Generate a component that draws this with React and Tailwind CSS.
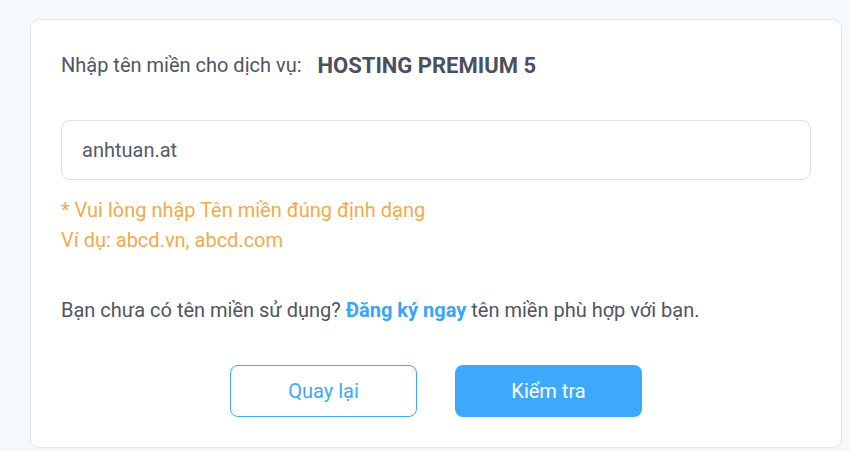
import React from 'react';

const App = () => {
  return (
    <div className="min-h-[451px] bg-[#f6f9fc] pt-[19px] px-[30px] pr-[8px]" style={{ fontFamily: 'Roboto, "Noto Sans", sans-serif' }}>
      <div className="w-[812px] bg-white border border-[#e3e5e8] rounded-[9px] pt-[31px] pb-[30px] px-[30px]">
        <div className="flex items-center h-[28px]">
          <span className="text-[20px] text-[#4f5562]">Nhập tên miền cho dịch vụ:</span>
          <span className="ml-[16px] text-[22px] font-bold text-[#4a505e]">HOSTING PREMIUM 5</span>
        </div>

        <div className="mt-[41px] h-[60px] border border-[#dcdfe3] rounded-[9px] flex items-center px-[20px]">
          <span className="text-[20px] text-[#555b66]">anhtuan.at</span>
        </div>

        <div className="mt-[15px] text-[20px] leading-[30px] text-[#f2aa4c]">
          <p>* Vui lòng nhập Tên miền đúng định dạng</p>
          <p>Ví dụ: abcd.vn, abcd.com</p>
        </div>

        <p className="mt-[41px] text-[20px] leading-[28px] text-[#4f5562]">
          Bạn chưa có tên miền sử dụng? <a className="font-bold text-[#3aa5f5]">Đăng ký ngay</a> tên miền phù hợp với bạn.
        </p>

        <div className="mt-[41px] flex justify-center gap-[38px]">
          <button className="w-[187px] h-[52px] rounded-[8px] border border-[#3ea8fc] bg-white text-[20px] text-[#3ea8fc]">
            Quay lại
          </button>
          <button className="w-[187px] h-[52px] rounded-[8px] bg-[#3da9fc] text-[20px] text-white">
            Kiểm tra
          </button>
        </div>
      </div>
    </div>
  );
};

export default App;
